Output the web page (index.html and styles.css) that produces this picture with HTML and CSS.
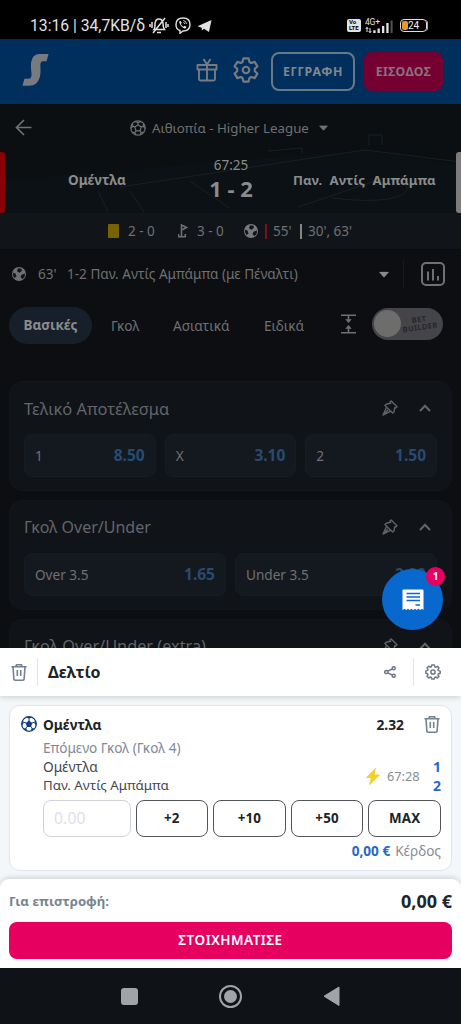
FILE: index.html
```html
<!DOCTYPE html>
<html lang="el">
<head>
<meta charset="utf-8">
<meta name="viewport" content="width=device-width, initial-scale=1">
<title>Δελτίο</title>
<link rel="stylesheet" href="styles.css">
</head>
<body>
<svg class="defs" width="0" height="0" aria-hidden="true">
  <symbol id="trash" viewBox="0 0 16 17"><path d="M.4 2.800h15.200M4.800 2.600l.7-1.800h5l.7 1.800M2 3l.9 12.200q.1 1 1.100 1h8q1 0 1.100-1L14 3M6.300 6v6M9.700 6v6" fill="none" stroke="currentColor" stroke-width="1.600"/></symbol>
  <symbol id="pin" viewBox="0 0 16 16"><path d="M9.200.9 15 6.700 13.600 8l-.9-.3-.7 4.200-1.300 1.200-3.700-3.600L2.900 5.600l1.300-1.300L8.600 3.300 8 2.100zM4.500 7.500 1 15l7.400-3.600M1 15l5-5" fill="none" stroke="currentColor" stroke-width="1.400" stroke-linejoin="round"/></symbol>
  <symbol id="up" viewBox="0 0 12 8"><path d="M1 7 6 1.700 11 7" fill="none" stroke="currentColor" stroke-width="2"/></symbol>
  <symbol id="down" viewBox="0 0 10 6"><path d="M.8.300h8.400q.8.100.3.800L5.600 5.500q-.6.600-1.200 0L.5 1.100Q0 .4.800.300z" fill="currentColor"/></symbol>
  <symbol id="gear" viewBox="0 0 24 24"><path d="M9.600 1.300h4.800l.8 3.300 1.600.9 3.200-1 2.500 4.200-2.400 2.200v2.200l2.400 2.200-2.500 4.200-3.200-1-1.600.9-.8 3.300H9.600l-.8-3.300-1.600-.9-3.200 1-2.500-4.200 2.400-2.200v-2.200L1.500 8.700 4 4.500l3.200 1 1.600-.9z" fill="none" stroke="currentColor" stroke-width="2" stroke-linejoin="round"/><circle cx="12" cy="12" r="3" fill="none" stroke="currentColor" stroke-width="2"/></symbol>
  <symbol id="ball" viewBox="0 0 16 16"><circle cx="8" cy="8" r="7" fill="currentColor"/><path d="M7 2.200 10.500 2.800 10.800 5 8.400 6.700 6 5.200zM2 6.800 4.500 7.600 5.500 10.500 3.600 12Q1.500 10 2 6.800zM10.500 8.700 14 7.500 13.600 11 11.500 13 9.500 11.200z" fill="#11151b"/></symbol>
</svg>

<div class="screen">
  <div class="statusbar">
    <span class="clock">13:16 | 34,7KB/δ</span>
    <svg class="bell" viewBox="0 0 20 18"><path d="M5 12.500q1-1 1-6Q6.500 2 10 2t4 4.500q0 4 1.500 6zM8 15.500h4M4 16 16 1M3 5v6M1 7v3M17 5v6M19 7v3" fill="none" stroke="currentColor" stroke-width="1.500"/></svg>
    <svg class="viber" viewBox="0 0 16 17"><path d="M8 1Q15 1 15 7.500T8 14L5 16.200v-2.700Q1 12.500 1 7.500 1 1 8 1z" fill="none" stroke="currentColor" stroke-width="1.400"/><path d="m5.400 3.700 1.400 2-1 1.200q1 2 2.700 2.800l1-1 2 1.300q-.7 2-2.300 1.400Q5.400 9.500 4.200 5.300q.1-1.200 1.200-1.600z" fill="currentColor"/><path d="M8.300 3.500q3 .3 3.200 3.500M8.500 5.500q1.100.2 1.200 1.400" fill="none" stroke="currentColor" stroke-width=".9"/></svg>
    <svg class="plane" viewBox="0 0 15 14"><path d="M14.500 1 12 13 6.900 9.700l-2 1.700-.2-2.700L.5 7.200z" fill="currentColor"/></svg>
    <span class="volte"><b>Vo</b><b>LTE</b></span>
    <svg class="signal" viewBox="0 0 28 18"><text x="0" y="7.500" font-size="8.500" textLength="15">4G+</text><path d="M2 15v-4.500M5 11v4.500M.8 12 2 10.300 3.200 12M3.800 14 5 15.700 6.200 14" stroke="currentColor" fill="none"/><path d="M8.300 13.300h2.300v2.700H8.300zM12.500 11.500h2.300V16h-2.300zM17 9h2.300v7H17zM21.300 6h2.300v10h-2.300z" fill="currentColor"/><path d="M25.600 3.500h2V16h-2z" fill="#555"/></svg>
    <div class="battery"><i></i><span>24</span></div>
  </div>

  <header class="topbar">
    <svg class="logo" viewBox="0 0 28 34"><path d="M27.500.5 25.500 8h-4.200q-1.600 0-2 1.800l-.3 2q0 2 .2 4.500.3 4-.7 8-2.500 9-11 9H.5l2-7.300H7q2.100 0 2.700-2.300.5-2-.1-5.500-.8-5-.1-9.500Q11 .5 18 .5z" fill="currentColor"/></svg>
    <svg class="gift" viewBox="0 0 22 24"><path d="M1.500 7h19v4.500h-19zM3 11.500V21q0 1.500 1.500 1.500h13Q19 22.500 19 21v-9.500M11 7v15M11 6.500 7.500 1M11 6.500 14.500 1" fill="none" stroke="currentColor" stroke-width="1.900" stroke-linejoin="round"/></svg>
    <svg class="gear" viewBox="0 0 24 24"><use href="#gear"/></svg>
    <div class="btn signup">ΕΓΓΡΑΦΗ</div>
    <div class="btn login">ΕΙΣΟΔΟΣ</div>
  </header>

  <main class="page">
    <section class="hero">
      <svg class="pitch" viewBox="0 0 461 109" preserveAspectRatio="none"><path d="M0 76 365 46l96 15v48H0z"/><path d="M120 83 365 46l96 12M190 77l39 27M98 87l10 21M130 87l14 21M268 47l34-3v6M298 103l86-29q34 5 18 17-20 9-70 3M369 42V31h13v10" class="lines"/></svg>
      <div class="league">
        <svg class="back" viewBox="0 0 17 17"><path d="M16.500 8.500h-15M9 1 1.500 8.500 9 16" fill="none" stroke="currentColor" stroke-width="1.700"/></svg>
        <svg class="sport" viewBox="0 0 16 16"><g fill="none" stroke="currentColor" stroke-width="1.200"><circle cx="8" cy="8" r="7.200"/><path d="m8 4.800 3.200 2.300-1.200 3.700H6L4.800 7.100zM8 4.800V2.700L5 1.500M8 2.700l3-1.200M11.200 7.100l2-1 .5-3M13.200 6.100l1.800 2.400M10 10.800l1.200 1.700 3-.2M11.200 12.500 10 15M6 10.800l-1.200 1.700-3-.2M4.800 12.500 6 15M4.800 7.100l-2-1-.5-3M2.800 6.100 1 8.500"/></g></svg>
        <span>Αιθιοπία - Higher League</span>
        <svg class="caret" viewBox="0 0 10 6"><use href="#down"/></svg>
      </div>
      <div class="match">
        <i class="kit red"></i>
        <b class="team home">Ομέντλα</b>
        <div class="score"><span>67:25</span><b>1 - 2</b></div>
        <b class="team away">Παν. Αντίς Αμπάμπα</b>
        <i class="kit white"></i>
      </div>
    </section>
    <div class="stats">
      <i class="card-yellow"></i><span class="s1">2 - 0</span>
      <svg class="flag" viewBox="0 0 10 14"><path d="M3.500 12V1l5 2.500-4 2.200M.5 10v2.700h6.800V10" fill="none" stroke="currentColor" stroke-width="1.600"/></svg><span class="s2">3 - 0</span>
      <svg class="ball" viewBox="0 0 16 16"><use href="#ball"/></svg>
      <i class="bar r"></i><span class="s3">55'</span><i class="bar w"></i><span class="s4">30', 63'</span>
    </div>
    <div class="event">
      <svg class="ball" viewBox="0 0 16 16"><use href="#ball"/></svg>
      <span class="minute">63'</span><span class="goal">1-2 Παν. Αντίς Αμπάμπα (με Πέναλτι)</span>
      <svg class="caret" viewBox="0 0 10 6"><use href="#down"/></svg>
      <i class="divider"></i>
      <svg class="chart" viewBox="0 0 24 24"><rect x="1" y="1" width="22" height="22" rx="4" fill="none" stroke="currentColor" stroke-width="2"/><path d="M7 9.500V18.500M12 7v11.500M17 14v4.500" stroke="currentColor" stroke-width="2"/></svg>
    </div>
    <nav class="tabs">
      <b class="tab active">Βασικές</b><span class="t2">Γκολ</span><span class="t3">Ασιατικά</span><span class="t4">Ειδικά</span>
      <svg class="collapse" viewBox="0 0 15 20"><path d="M0 1.200h15M0 18.800h15M7.500 1v6M7.500 13v6" stroke="currentColor" stroke-width="1.600"/><path d="M4.200 5.300h6.600L7.500 9zM4.200 14.700h6.600L7.500 11z" fill="currentColor"/></svg>
      <div class="toggle"><i></i><b><span>BET</span><span>BUILDER</span></b></div>
    </nav>

    <section class="market">
      <div class="mhead"><h2 class="m1">Τελικό Αποτέλεσμα</h2><svg class="pin"><use href="#pin"/></svg><svg class="up"><use href="#up"/></svg></div>
      <div class="odds">
        <div class="odd"><span>1</span><b>8.50</b></div>
        <div class="odd"><span>X</span><b>3.10</b></div>
        <div class="odd"><span>2</span><b>1.50</b></div>
      </div>
    </section>
    <section class="market">
      <div class="mhead"><h2 class="m2">Γκολ Over/Under</h2><svg class="pin"><use href="#pin"/></svg><svg class="up"><use href="#up"/></svg></div>
      <div class="odds">
        <div class="odd"><span>Over 3.5</span><b>1.65</b></div>
        <div class="odd"><span>Under 3.5</span><b>2.20</b></div>
      </div>
    </section>
    <section class="market">
      <div class="mhead"><h2 class="m3">Γκολ Over/Under (extra)</h2><svg class="pin"><use href="#pin"/></svg><svg class="up"><use href="#up"/></svg></div>
      <div class="odds"></div>
    </section>
    <div class="fab">
      <svg viewBox="0 0 22 22"><path d="M.5 1.500q0-1 1-1h19q1 0 1 1V21l-1.500-1.200L18.200 21l-1.700-1.200L14.700 21 13 19.800 11.200 21l-1.700-1.200L7.700 21 6 19.800 4.200 21l-1.700-1.200-2 1.200z" fill="#fff"/><path d="M4.500 4.500h13.500M4.500 8h13.500M4.500 11.500h13.500M13.500 16H18" stroke="#0868ce" stroke-width="1.500"/></svg>
      <b>1</b>
    </div>
  </main>

  <section class="slip">
    <div class="sliphead">
      <svg class="trash"><use href="#trash"/></svg><i class="rule"></i><h1>Δελτίο</h1>
      <svg class="share" viewBox="0 0 12 12"><path d="M8 3 4 5.200M4 6.800 8 9" stroke="currentColor" stroke-width="1.500"/><g fill="none" stroke="currentColor" stroke-width="1.500"><circle cx="9.700" cy="2.200" r="1.500"/><circle cx="2.300" cy="6" r="1.600"/><circle cx="9.700" cy="9.800" r="1.500"/></g></svg>
      <i class="rule"></i>
      <svg class="cog" viewBox="0 0 16 16"><path d="m6.700 1 2.600 0 .5 1.900.9.400L12.400 2.300 14 4l-1 1.600.4 1 1.800.5v2.200l-1.800.5-.4 1L14 12.400 12.300 14l-1.600-1-1 .4L9.200 15H6.800l-.5-1.600-1-.4L3.700 14 2 12.300l1-1.600-.4-1L.8 9.200V6.900l1.800-.5.400-1L2 3.800 3.700 2.200l1.600 1 .9-.4z" fill="none" stroke="currentColor" stroke-width="1.500" stroke-linejoin="round"/><circle cx="8" cy="8" r="2.100" fill="none" stroke="currentColor" stroke-width="1.500"/></svg>
    </div>
    <div class="slipbody">
      <article class="bet">
        <div class="pick">
          <svg class="football" viewBox="0 0 16 16"><circle cx="8" cy="8" r="7.300" fill="#fff" stroke="#123e80" stroke-width="1.300"/><path d="m8 4.600 3.300 2.400-1.300 3.900H6L4.700 7zM4.500 1.500 8 2.600l3.500-1.100Q8 0 4.500 1.500zM14 4.500l-.5 3 1.800 2.200Q16 7 14 4.500zM2 4.500l.5 3L.7 9.700Q0 7 2 4.500zM13.600 12.300l-3 .3L9.500 15q3-.5 4.100-2.700zM2.400 12.300l3 .3L6.500 15q-3-.5-4.100-2.700z" fill="#123e80"/><path d="M8 5V2M11 7l3-1M10 10.500l1.500 2.500M6 10.500 4.500 13M5 7 2 6" stroke="#123e80"/></svg>
          <b class="name">Ομέντλα</b><b class="price">2.32</b><svg class="trash"><use href="#trash"/></svg>
        </div>
        <div class="info">
          <div class="market-name">Επόμενο Γκολ (Γκολ 4)</div>
          <div class="live">
            <div class="teams"><span class="first">Ομέντλα</span><span class="second">Παν. Αντίς Αμπάμπα</span></div>
            <svg class="bolt" viewBox="0 0 14 17"><path d="M9.500.3.500 9.600h5L3.500 16.700 13.500 7H8z" fill="#f5cf1b" stroke="#f5cf1b" stroke-width=".8" stroke-linejoin="round"/></svg>
            <span class="time">67:28</span>
            <div class="goals"><b>1</b><b>2</b></div>
          </div>
          <div class="stakes">
            <div class="stake">0.00</div><b>+2</b><b>+10</b><b>+50</b><b>MAX</b>
          </div>
          <div class="profit"><b>0,00 €</b><span>Κέρδος</span></div>
        </div>
      </article>
    </div>
    <footer class="total">
      <div class="sum"><b class="ret">Για επιστροφή:</b><b class="amount">0,00 €</b></div>
      <div class="place">ΣΤΟΙΧΗΜΑΤΙΣΕ</div>
    </footer>
  </section>

  <div class="android">
    <i class="recent"></i><i class="homebtn"></i>
    <svg viewBox="0 0 16 20"><path d="M15.500 1v18.500L.5 10.200z" fill="#a2a3a6" stroke="#a2a3a6" stroke-linejoin="round"/></svg>
  </div>
</div>
</body>
</html>
```

FILE: styles.css
```css
* { box-sizing: border-box; margin: 0; }
body { font-family: "Noto Sans", "Open Sans", sans-serif; background: #0f1217; font-size: 13px; }
.defs { position: absolute; }
.screen { width: 461px; height: 1024px; display: flex; flex-direction: column; overflow: hidden; }
svg, i { display: block; flex: none; }
span, b { white-space: nowrap; }
b { font-weight: 700; }

.statusbar { height: 39px; flex: none; background: #000; color: #e2e2e2; display: flex; align-items: center; padding: 12px 34px 0 30px; font-family: Roboto, sans-serif; }
.clock { font-size: 15.700px; width: 119px; }
.bell { width: 20px; height: 18px; }
.viber { width: 16px; height: 17px; margin-left: 6px; }
.plane { width: 15px; height: 14px; margin-left: 6px; }
.volte { margin-left: auto; width: 14px; height: 13px; background: #e2e2e2; color: #000; border-radius: 2px; font-size: 6px; line-height: 6px; display: flex; flex-direction: column; padding-left: 2px; }
.signal { width: 28px; height: 18px; margin-left: 4px; fill: currentColor; }
.battery { width: 27px; height: 13px; border: 1.500px solid #ddd; border-radius: 4px; margin-left: 7px; display: flex; align-items: center; font-size: 10px; padding: 1px; color: #eee; box-shadow: 2px 0 0 -1px #aaa; }
.battery i { width: 6px; height: 9px; background: #e59a27; border-radius: 2px; }

.topbar { height: 65px; flex: none; background: #002e5d; color: #777b80; display: flex; align-items: center; padding: 0 18px 0 22px; }
.logo { width: 27px; height: 34px; margin-right: auto; margin-top: -3px; }
.gift { width: 22px; height: 24px; margin-top: -3px; }
.topbar .gear { width: 26px; height: 26px; margin: -3px 12px 0 15px; }
.btn { height: 39px; border-radius: 8px; display: flex; align-items: center; justify-content: center; font-weight: 700; font-size: 12.300px; color: #82868c; }
.signup { width: 84px; border: 2px solid #687887; margin-right: 9px; letter-spacing: .5px; }
.login { width: 79px; background: #740032; color: #8b7180; letter-spacing: .4px; }

.page { height: 544px; flex: none; background: #0c0e11; color: #6f7072; position: relative; overflow: hidden; display: flex; flex-direction: column; }
.hero { height: 109px; flex: none; background: #0b0f12; position: relative; }
.pitch { position: absolute; inset: 0; width: 461px; height: 109px; fill: #0b1114; }
.pitch .lines { fill: none; stroke: #192022; stroke-width: 1; }
.league, .match { position: relative; display: flex; align-items: center; }
.league { height: 47px; padding-left: 15px; font-size: 13.300px; }
.league span { width: 158px; }
.back { width: 17px; height: 17px; margin-right: 98px; }
.sport { width: 16px; height: 16px; margin-right: 6px; }
.league .caret { width: 9px; height: 6px; margin-left: 9px; }
.match { height: 62px; color: #8a8b8c; }
.kit { width: 5px; height: 61px; border-radius: 0 3px 3px 0; background: #8b0004; }
.kit.white { background: #7c7c7c; border-radius: 3px 0 0 3px; }
.team { font-size: 13.200px; margin-top: -5px; }
.home { margin-left: 63px; width: 59px; font-size: 13.500px; }
.away { margin-right: 20px; width: 143px; word-spacing: 4px; }
.score { display: flex; flex-direction: column; align-items: center; width: 60px; margin: -7px auto 0 74px; }
.score span { font-size: 13.500px; line-height: 20px; }
.score b { font-size: 22px; line-height: 27px; }
.stats { height: 37px; flex: none; background: #11151a; border-bottom: 1px solid #0a0b0d; display: flex; align-items: center; padding-left: 108px; font-size: 13.500px; }
.card-yellow { width: 11px; height: 14px; background: #786300; border-radius: 1px; margin-right: 9px; }
.s1 { width: 50px; }
.flag { width: 10px; height: 14px; margin-right: 9px; }
.s2 { width: 46px; }
.stats .ball { width: 16px; height: 16px; color: #77797b; }
.bar { width: 2px; height: 15px; background: #7d1116; margin: 0 6px 0 6px; }
.bar.w { background: #858585; margin: 0 6px 0 0; }
.s3 { width: 27px; }
.event { height: 48px; flex: none; display: flex; align-items: center; padding: 0 16px 0 11px; font-size: 13.550px; }
.event .ball { width: 16px; height: 16px; margin-right: 11px; }
.minute { width: 29px; }
.goal { margin-right: auto; }
.event .caret { width: 10px; height: 7px; color: #88898a; }
.divider { width: 1px; height: 28px; background: #17191c; margin: 0 17px 0 14px; }
.chart { width: 24px; height: 24px; }
.tabs { height: 83px; flex: none; padding: 9px 18px 37px 9px; display: flex; align-items: center; font-size: 13.600px; }
.tab { width: 83px; height: 37px; background: #17202a; border-radius: 19px; text-align: center; line-height: 37px; color: #8a8b8d; font-size: 13.500px; margin-right: 19px; }
.t2 { width: 62px; }
.t3 { width: 91px; }
.t4 { width: 77px; }
.collapse { width: 15px; height: 20px; margin-top: -4px; }
.toggle { width: 71px; height: 32px; margin: -4px 0 0 auto; border-radius: 16px; background: #444449; padding: 2px; display: flex; align-items: center; color: #25272d; }
.toggle i { width: 27px; height: 27px; border-radius: 50%; background: #6d6d6b; }
.toggle b { display: flex; flex-direction: column; align-items: center; font-size: 7.500px; line-height: 7.500px; transform: rotate(-8deg); letter-spacing: .4px; margin-left: 1px; }

.market { width: 443px; height: 110px; flex: none; margin: 0 0 9px 9px; border: 1px solid #12161b; border-radius: 13px; background: #101318; padding: 0 14px; }
.mhead { height: 52px; display: flex; align-items: center; }
.mhead h2 { font-weight: 400; font-size: 16.400px; color: #626569; margin-right: auto; white-space: nowrap; }
.mhead .m2 { font-size: 16px; }
.mhead .m3 { font-size: 16.300px; }
.pin { width: 16px; height: 16px; color: #606267; margin-right: 21px; }
.up { width: 12px; height: 8px; margin-right: 6px; color: #636468; }
.odds { display: flex; gap: 9px; }
.odd { flex: 1; height: 43px; border: 1px solid #171b22; border-radius: 8px; background: #141920; display: flex; justify-content: space-between; align-items: center; padding: 0 10px 1px; font-size: 13.600px; }
.odd b { font-size: 15.500px; color: #284b71; }
.fab { position: absolute; left: 382px; top: 465px; width: 61px; height: 61px; border-radius: 50%; background: #0868ce; display: grid; place-items: center; }
.fab svg { width: 22px; height: 22px; }
.fab b { position: absolute; right: -2px; top: -2px; width: 19px; height: 19px; border-radius: 50%; background: #e50062; color: #fff; font-size: 10px; line-height: 19px; text-align: center; }

.slip { height: 320px; flex: none; background: #f4f7fa; display: flex; flex-direction: column; color: #202327; }
.sliphead { height: 48px; background: #fff; display: flex; align-items: center; padding: 0 20px 0 11px; box-shadow: 0 2px 5px #0002; color: #6c7a8b; }
.trash { width: 16px; height: 17px; color: #748292; }
.rule { width: 1px; height: 28px; background: #dfe2e6; margin: 0 10px; }
.sliphead h1 { font-size: 16px; color: #202327; margin-right: auto; }
.share { width: 12px; height: 12px; margin-right: 7px; }
.cog { width: 16px; height: 16px; margin-left: 1px; }
.slipbody { height: 183px; padding: 9px 9px 0; }
.bet { height: 166px; background: #fff; border: 1px solid #e2e6ec; border-radius: 11px; padding: 6px 10px 0 11px; }
.pick { height: 24px; display: flex; align-items: center; }
.football { width: 16px; height: 16px; margin-right: 6px; }
.name { font-size: 13.700px; margin-right: auto; }
.price { font-size: 13.800px; margin-right: 20px; }
.pick .trash { margin-right: 1px; }
.info { padding-left: 22px; }
.market-name { font-size: 13.600px; line-height: 19px; margin-top: 2px; color: #7e8a99; }
.live { display: flex; height: 38px; align-items: center; }
.teams { display: flex; flex-direction: column; line-height: 19px; margin-right: auto; font-size: 13.300px; color: #42474e; }
.first { font-size: 13.700px; }
.bolt { width: 14px; height: 17px; margin-right: 7px; }
.time { font-size: 12.800px; color: #858d96; width: 33px; }
.goals { display: flex; flex-direction: column; line-height: 19px; font-size: 14px; color: #2868c7; margin-left: 13px; }
.stakes { display: flex; gap: 5px; margin-top: 5px; }
.stakes > * { height: 37px; border: 1px solid #515459; border-radius: 8px; flex: 1 1 0; text-align: center; line-height: 35px; font-size: 13.400px; letter-spacing: .2px; }
.stakes .stake { flex: 0 0 87.500px; text-align: left; padding-left: 10px; border-color: #cfd2d7; color: #dde0e6; font-size: 15.500px; }
.profit { display: flex; justify-content: flex-end; gap: 5px; font-size: 13.600px; line-height: 28px; color: #858d96; }
.profit b { color: #2868c7; }
.total { height: 89px; background: #fff; border-radius: 9px 9px 0 0; box-shadow: 0 -2px 5px #0002; padding: 0 9px 9px; }
.sum { height: 43px; display: flex; justify-content: space-between; align-items: center; }
.ret { font-size: 13.200px; color: #768492; }
.amount { font-size: 18px; }
.place { height: 37px; border-radius: 8px; background: #e60060; color: #fff; text-align: center; font-weight: 600; font-size: 13.500px; letter-spacing: .5px; line-height: 37px; }

.android { height: 56px; flex: none; background: #0f1217; display: flex; align-items: center; justify-content: center; gap: 81px; }
.recent { width: 17px; height: 17px; border-radius: 3px; background: #a2a3a6; }
.homebtn { width: 23px; height: 23px; border-radius: 50%; border: 2px solid #a2a3a6; padding: 3px; background: #a2a3a6 content-box; }
.android svg { width: 17px; height: 20px; }
```
